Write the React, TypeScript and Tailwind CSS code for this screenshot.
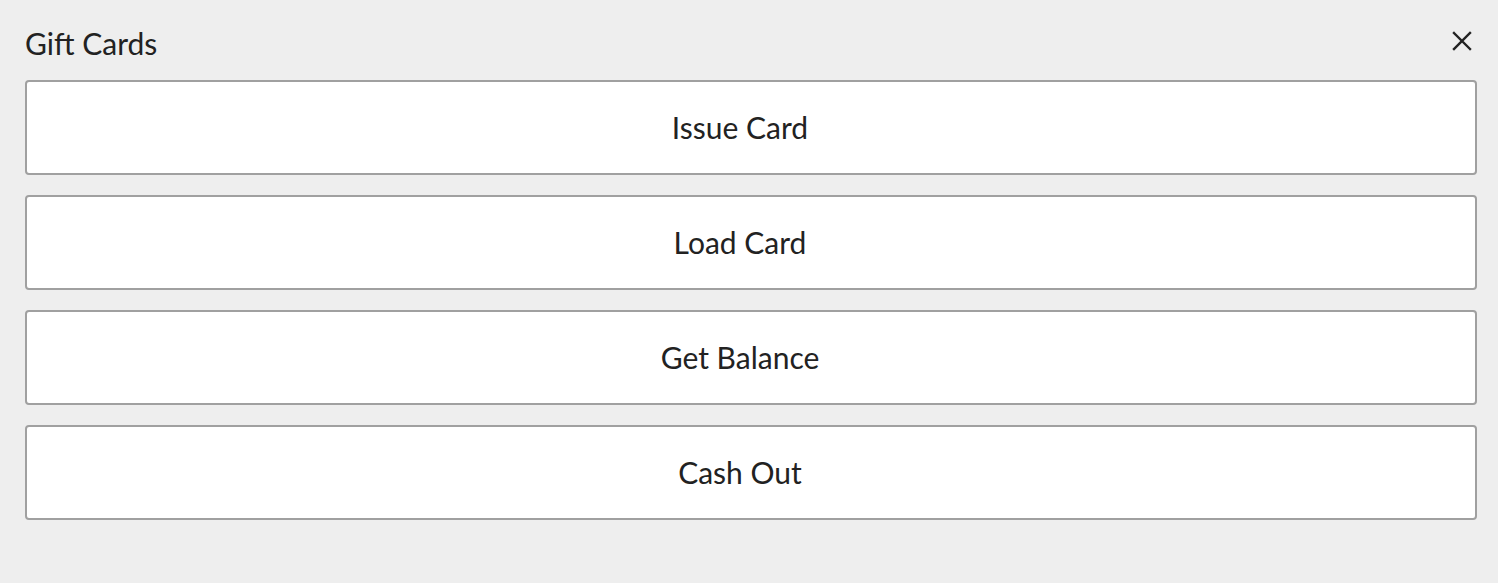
export default function App() {
  const actions = ["Issue Card", "Load Card", "Get Balance", "Cash Out"];

  return (
    <div
      className="w-[1498px] h-[583px] bg-[#eeeeee] text-[#222222] pl-[25px] pr-[21px]"
      style={{ fontFamily: "Lato, 'Open Sans', sans-serif" }}
    >
      {/* Header */}
      <div className="flex items-center justify-between h-[80px] pt-[5px]">
        <span className="text-[30px] leading-none">Gift Cards</span>
        <button className="w-[24px] h-[24px] flex items-center justify-center mr-[3px] mb-[3px]">
          <svg width="20" height="20" viewBox="0 0 20 20" fill="none" stroke="#222222" strokeWidth="2.4" strokeLinecap="square">
            <path d="M2 2 L18 18 M18 2 L2 18" />
          </svg>
        </button>
      </div>

      {/* Actions */}
      <div className="flex flex-col gap-[20px]">
        {actions.map((label) => (
          <button
            key={label}
            className="h-[95px] w-full bg-white border-2 border-[#a0a0a0] rounded-[4px] pr-[22px] text-[30px] text-[#222222] flex items-center justify-center"
          >
            {label}
          </button>
        ))}
      </div>
    </div>
  );
}
